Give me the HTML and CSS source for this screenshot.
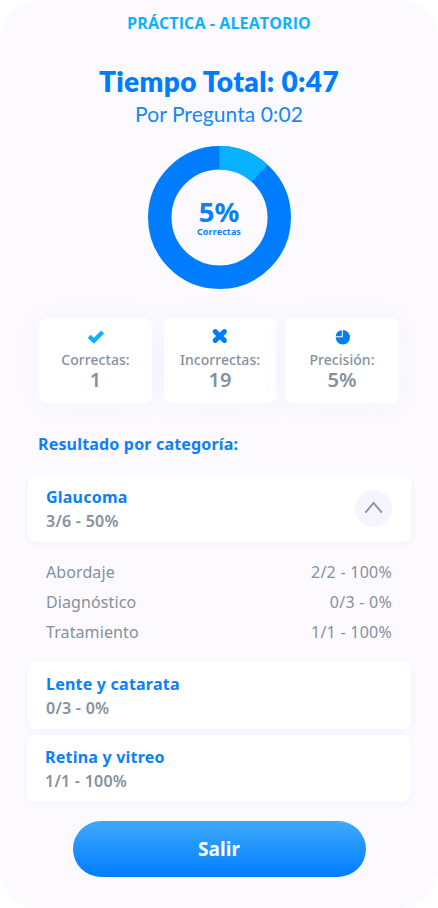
FILE: index.html
```html
<!DOCTYPE html>
<html lang="es">
<head>
<meta charset="utf-8">
<title>Práctica - Aleatorio</title>
<link rel="stylesheet" href="styles.css">
</head>
<body>
<main class="screen">
  <header class="mode">PRÁCTICA - ALEATORIO</header>
  <h1 class="total">Tiempo Total: 0:47</h1>
  <p class="average">Por Pregunta 0:02</p>

  <div class="donut">
    <svg class="donut-ring" viewBox="-71.5 -71.5 143 143" aria-hidden="true">
      <circle r="59.75" fill="none" stroke="#007dff" stroke-width="23.5"/>
      <path d="M0-71.5A71.5 71.5 0 0 1 48.2-52.8L32.3-35.5A48 48 0 0 0 0-48Z" fill="#08b2ff"/>
    </svg>
    <div class="donut-label">
      <strong class="donut-value">5%</strong>
      <span class="donut-caption">Correctas</span>
    </div>
  </div>

  <section class="stats">
    <div class="stat">
      <svg class="icon" viewBox="0 0 18 18" aria-hidden="true"><path d="M2.2 8.4L6.9 12.8L15.6 4" fill="none" stroke="#08b2ff" stroke-width="4.2"/></svg>
      <span class="stat-name">Correctas:</span>
      <span class="stat-value">1</span>
    </div>
    <div class="stat">
      <svg class="icon" viewBox="0 0 18 18" aria-hidden="true"><path d="M4.2 3.6L13.4 12.4M13.4 3.6L4.2 12.4" fill="none" stroke="#007dff" stroke-width="5" stroke-linecap="round"/></svg>
      <span class="stat-name">Incorrectas:</span>
      <span class="stat-value">19</span>
    </div>
    <div class="stat">
      <svg class="icon" viewBox="0 0 18 18" aria-hidden="true"><path d="M9.8 2.1A7.2 7.2 0 1 1 2.6 9.3H9.8Z" fill="#007dff"/><path d="M8.8 2.3V8.3H2.7A6.3 6.3 0 0 1 8.8 2.3Z" fill="#007dff"/></svg>
      <span class="stat-name">Precisión:</span>
      <span class="stat-value">5%</span>
    </div>
  </section>

  <h2 class="heading">Resultado por categoría:</h2>

  <section class="categories">
    <article class="category">
      <div class="category-text">
        <h3 class="category-name">Glaucoma</h3>
        <p class="category-score">3/6 - 50%</p>
      </div>
      <button class="toggle" aria-label="Contraer">
        <svg viewBox="0 0 37 37" aria-hidden="true"><path d="M10.4 22.6L18.6 13L26.8 22.6" fill="none" stroke="#84919e" stroke-width="1.8"/></svg>
      </button>
    </article>
    <dl class="details">
      <div class="detail"><dt>Abordaje</dt><dd>2/2 - 100%</dd></div>
      <div class="detail"><dt>Diagnóstico</dt><dd>0/3 - 0%</dd></div>
      <div class="detail"><dt>Tratamiento</dt><dd>1/1 - 100%</dd></div>
    </dl>
    <article class="category">
      <div class="category-text">
        <h3 class="category-name">Lente y catarata</h3>
        <p class="category-score">0/3 - 0%</p>
      </div>
    </article>
    <article class="category last">
      <div class="category-text">
        <h3 class="category-name">Retina y vitreo</h3>
        <p class="category-score">1/1 - 100%</p>
      </div>
    </article>
  </section>

  <button class="exit">Salir</button>
</main>
</body>
</html>
```
FILE: styles.css
```css
* { box-sizing: border-box; margin: 0; padding: 0; }

body {
  background: #fff;
  font-family: "Noto Sans", "Open Sans", sans-serif;
  color: #84919e;
}

button { border: 0; font-family: inherit; }

.screen {
  width: 438px;
  height: 908px;
  padding-top: 11px;
  background: #fcfaff;
  border-radius: 38px;
  display: flex;
  flex-direction: column;
  align-items: center;
  overflow: hidden;
  white-space: nowrap;
}

.mode {
  font-family: "Open Sans", sans-serif;
  font-size: 16px;
  font-weight: 700;
  line-height: 24px;
  letter-spacing: 0.1px;
  color: #08b2ff;
}

.total {
  margin-top: 27px;
  font-family: Lato, sans-serif;
  font-size: 28px;
  font-weight: 800;
  line-height: 38px;
  letter-spacing: 0.36px;
  color: #007dff;
}

.average {
  font-family: Lato, sans-serif;
  font-size: 21px;
  line-height: 28px;
  letter-spacing: 0.08px;
  color: #1487fc;
}

.donut {
  display: grid;
  width: 143px;
  height: 143px;
  margin-top: 18px;
  place-items: center;
}

.donut-ring, .donut-label { grid-area: 1 / 1; }
.donut-ring { width: 143px; height: 143px; }

.donut-label {
  display: flex;
  flex-direction: column;
  align-items: center;
  padding-top: 2px;
  color: #0a80fb;
}

.donut-value { font-size: 27.5px; line-height: 26px; }
.donut-caption { font-size: 9px; font-weight: 700; line-height: 13px; letter-spacing: 0.1px; }

.stats {
  display: flex;
  width: 360px;
  height: 85px;
  margin-top: 29px;
}

.stat {
  display: flex;
  flex: 0 0 113px;
  flex-direction: column;
  align-items: center;
  padding-top: 10px;
  background: #fff;
  border-radius: 8px;
  box-shadow: 0 2px 28px rgba(120, 130, 230, 0.06);
}

.stat:nth-child(2) { flex-basis: 112px; margin: 0 9px 0 12px; }
.stat:nth-child(3) { flex-basis: 114px; }

.icon { width: 18px; height: 18px; }
.stat-name { margin-top: 4px; font-size: 14px; font-weight: 500; line-height: 19px; letter-spacing: 0.05px; }
.stat-value { font-size: 20px; font-weight: 600; line-height: 22px; }

.heading {
  align-self: flex-start;
  margin: 29px 0 0 38px;
  font-size: 16px;
  line-height: 24px;
  letter-spacing: 0.18px;
  color: #0a80fb;
}

.categories { width: 383px; margin: 18.5px 0 0 1px; }

.category {
  display: flex;
  justify-content: space-between;
  align-items: center;
  height: 67.5px;
  padding: 0 19.5px 0 18px;
  background: #fff;
  border-radius: 8px;
  box-shadow: 0 2px 6px rgba(110, 110, 210, 0.06);
}

.category-text { padding-top: 2px; }
.category-name { font-size: 16px; line-height: 24px; letter-spacing: 0.22px; color: #0a80fb; }
.category-score { font-size: 16px; font-weight: 600; line-height: 25px; letter-spacing: 0.25px; }

.toggle { width: 37px; height: 37px; border-radius: 50%; background: #f4f5fe; }
.toggle svg { display: block; width: 37px; height: 37px; }

.details { padding: 14.5px 19px 14px 18px; }
.detail { display: flex; justify-content: space-between; font-size: 16px; line-height: 30.4px; letter-spacing: 0.1px; }
.detail dd { letter-spacing: 0.25px; }

.last { margin: 5.5px 1px 0 -1px; }

.exit {
  width: 293px;
  height: 56px;
  margin-top: 19px;
  padding-top: 1px;
  border-radius: 28px;
  background: linear-gradient(#3fa9f9, #007dff);
  color: #fff;
  font-size: 19px;
  font-weight: 700;
  line-height: 55px;
  letter-spacing: 0.1px;
}
```
